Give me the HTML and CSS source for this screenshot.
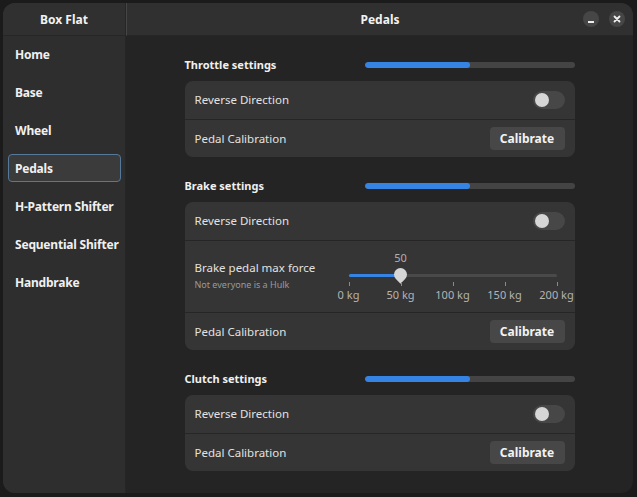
FILE: index.html
```html
<!DOCTYPE html>
<html>
<head>
<meta charset="utf-8">
<link rel="stylesheet" href="styles.css">
</head>
<body>
<div class="window">
  <aside class="sidebar">
    <div class="side-header">Box Flat</div>
    <nav class="nav">
      <div class="nav-item">Home</div>
      <div class="nav-item">Base</div>
      <div class="nav-item">Wheel</div>
      <div class="nav-item active">Pedals</div>
      <div class="nav-item">H-Pattern Shifter</div>
      <div class="nav-item">Sequential Shifter</div>
      <div class="nav-item">Handbrake</div>
    </nav>
  </aside>
  <main class="main">
    <header class="main-header">
      <div class="title">Pedals</div>
      <div class="win-buttons">
        <div class="win-btn"><svg width="16" height="16" viewBox="0 0 16 16"><rect x="5" y="10" width="6" height="2" fill="#eeeeee"/></svg></div>
        <div class="win-btn"><svg width="16" height="16" viewBox="0 0 16 16"><path d="M5.5 5.5 L10.5 10.5 M10.5 5.5 L5.5 10.5" stroke="#eeeeee" stroke-width="1.8" stroke-linecap="round"/></svg></div>
      </div>
    </header>
    <div class="content">
      <section class="group">
        <div class="group-head">
          <div class="group-title">Throttle settings</div>
          <div class="bar"><div class="bar-fill" style="width:50%"></div></div>
        </div>
        <div class="box">
          <div class="row">
            <div class="label">Reverse Direction</div>
            <div class="switch"><div class="knob"></div></div>
          </div>
          <div class="row">
            <div class="label">Pedal Calibration</div>
            <div class="btn">Calibrate</div>
          </div>
        </div>
      </section>
      <section class="group">
        <div class="group-head">
          <div class="group-title">Brake settings</div>
          <div class="bar"><div class="bar-fill" style="width:50%"></div></div>
        </div>
        <div class="box">
          <div class="row">
            <div class="label">Reverse Direction</div>
            <div class="switch"><div class="knob"></div></div>
          </div>
          <div class="row slider-row">
            <div class="labels">
              <div class="label">Brake pedal max force</div>
              <div class="sublabel">Not everyone is a Hulk</div>
            </div>
            <div class="scale">
              <div class="scale-value" style="left:25%">50</div>
              <div class="track"><div class="track-fill" style="width:25%"></div></div>
              <div class="thumb" style="left:25%"></div>
              <div class="mark" style="left:0%"><span class="tick"></span><span class="mark-label">0 kg</span></div>
              <div class="mark" style="left:25%"><span class="tick"></span><span class="mark-label">50 kg</span></div>
              <div class="mark" style="left:50%"><span class="tick"></span><span class="mark-label">100 kg</span></div>
              <div class="mark" style="left:75%"><span class="tick"></span><span class="mark-label">150 kg</span></div>
              <div class="mark" style="left:100%"><span class="tick"></span><span class="mark-label">200 kg</span></div>
            </div>
          </div>
          <div class="row">
            <div class="label">Pedal Calibration</div>
            <div class="btn">Calibrate</div>
          </div>
        </div>
      </section>
      <section class="group">
        <div class="group-head">
          <div class="group-title">Clutch settings</div>
          <div class="bar"><div class="bar-fill" style="width:50%"></div></div>
        </div>
        <div class="box">
          <div class="row">
            <div class="label">Reverse Direction</div>
            <div class="switch"><div class="knob"></div></div>
          </div>
          <div class="row">
            <div class="label">Pedal Calibration</div>
            <div class="btn">Calibrate</div>
          </div>
        </div>
      </section>
    </div>
  </main>
</div>
</body>
</html>
```

FILE: styles.css
```css
* { box-sizing: border-box; }
html, body { margin: 0; padding: 0; }
body {
  background: #1b1b1b;
  width: 637px;
  height: 497px;
  overflow: hidden;
  font-family: "Noto Sans", "Open Sans", sans-serif;
  color: #eeeeee;
}
.window {
  margin: 3px;
  width: 630px;
  height: 490px;
  border-radius: 12px;
  overflow: hidden;
  display: flex;
  background: #242424;
}
.sidebar {
  width: 123px;
  flex: none;
  background: #2e2e2e;
  border-right: 1px solid #262626;
  display: flex;
  flex-direction: column;
}
.side-header {
  height: 33px;
  background: #303030;
  border-bottom: 1px solid #262626;
  display: flex;
  align-items: center;
  justify-content: center;
  font-weight: 700;
  font-size: 12px;
  color: #f2f2f2;
}
.nav {
  padding: 4px 4px 0 5px;
  display: flex;
  flex-direction: column;
  gap: 10px;
}
.nav-item {
  height: 28px;
  border: 1px solid transparent;
  border-radius: 4px;
  padding-left: 6px;
  display: flex;
  align-items: center;
  white-space: nowrap;
  font-weight: 700;
  font-size: 12px;
  letter-spacing: -0.2px;
  color: #f0f0f0;
  padding-top: 1px;
}
.nav-item.active {
  background: #3b3b3b;
  border-color: #56789a;
}
.main {
  flex: 1;
  display: flex;
  flex-direction: column;
  min-width: 0;
}
.main-header {
  height: 33px;
  background: #303030;
  border-left: 1px solid #464646;
  border-bottom: 1px solid #262626;
  display: flex;
  align-items: center;
  justify-content: center;
  position: relative;
}
.title {
  font-weight: 700;
  font-size: 12px;
  color: #f2f2f2;
}
.win-buttons {
  position: absolute;
  right: 8px;
  top: 8px;
  display: flex;
  gap: 10px;
}
.win-btn {
  width: 16px;
  height: 16px;
  border-radius: 50%;
  background: #464646;
  display: flex;
}
.content {
  width: 390px;
  margin: 0 auto;
  padding-top: 19px;
  display: flex;
  flex-direction: column;
  gap: 19px;
}
.group-head {
  height: 20px;
  display: flex;
  align-items: center;
  justify-content: space-between;
  margin-bottom: 6px;
}
.group-title {
  font-weight: 700;
  font-size: 11px;
  color: #f0f0f0;
  margin-top: -2px;
}
.bar {
  width: 210px;
  height: 6px;
  border-radius: 3px;
  background: #444444;
  overflow: hidden;
}
.bar-fill {
  height: 100%;
  background: #3584e4;
  border-radius: 3px;
}
.box {
  background: #353535;
  border-radius: 8px;
}
.row {
  height: 38px;
  display: flex;
  align-items: center;
  justify-content: space-between;
  padding: 0 10px;
}
.row + .row { border-top: 1px solid #262626; }
.label {
  font-size: 11.5px;
  color: #e2e2e2;
  margin-top: -1px;
}
.sublabel {
  font-size: 9px;
  color: #9a9a9a;
  margin-top: 3px;
}
.switch {
  width: 32px;
  height: 18px;
  border-radius: 9px;
  background: #474747;
  padding: 2px;
}
.knob {
  width: 14px;
  height: 14px;
  border-radius: 50%;
  background: #d6d6d6;
}
.btn {
  width: 75px;
  height: 23px;
  border-radius: 4px;
  background: #474747;
  display: flex;
  align-items: center;
  justify-content: center;
  font-weight: 700;
  font-size: 12px;
  color: #f2f2f2;
}
.slider-row {
  height: 72px;
  align-items: flex-start;
}
.labels { padding-top: 20px; }
.scale {
  position: relative;
  width: 208px;
  height: 72px;
  margin-right: 8px;
}
.scale-value {
  position: absolute;
  top: 9px;
  transform: translateX(-50%);
  font-size: 11px;
  color: #b0b0b0;
}
.track {
  position: absolute;
  top: 33px;
  left: 0;
  right: 0;
  height: 3px;
  border-radius: 2px;
  background: #4a4a4a;
}
.track-fill {
  height: 100%;
  background: #3584e4;
  border-radius: 2px;
}
.thumb {
  position: absolute;
  top: 27px;
  width: 13px;
  height: 13px;
  margin-left: -6.5px;
  background: #d6d6d6;
  border-radius: 50% 50% 0 50%;
  transform: rotate(45deg);
}
.mark {
  position: absolute;
  top: 41px;
  width: 0;
}
.tick {
  position: absolute;
  left: 0;
  top: 0;
  width: 1px;
  height: 4px;
  background: #8a8a8a;
}
.mark-label {
  position: absolute;
  top: 5px;
  left: 0;
  transform: translateX(-50%);
  white-space: nowrap;
  font-size: 11px;
  color: #b4b4b4;
}
```
